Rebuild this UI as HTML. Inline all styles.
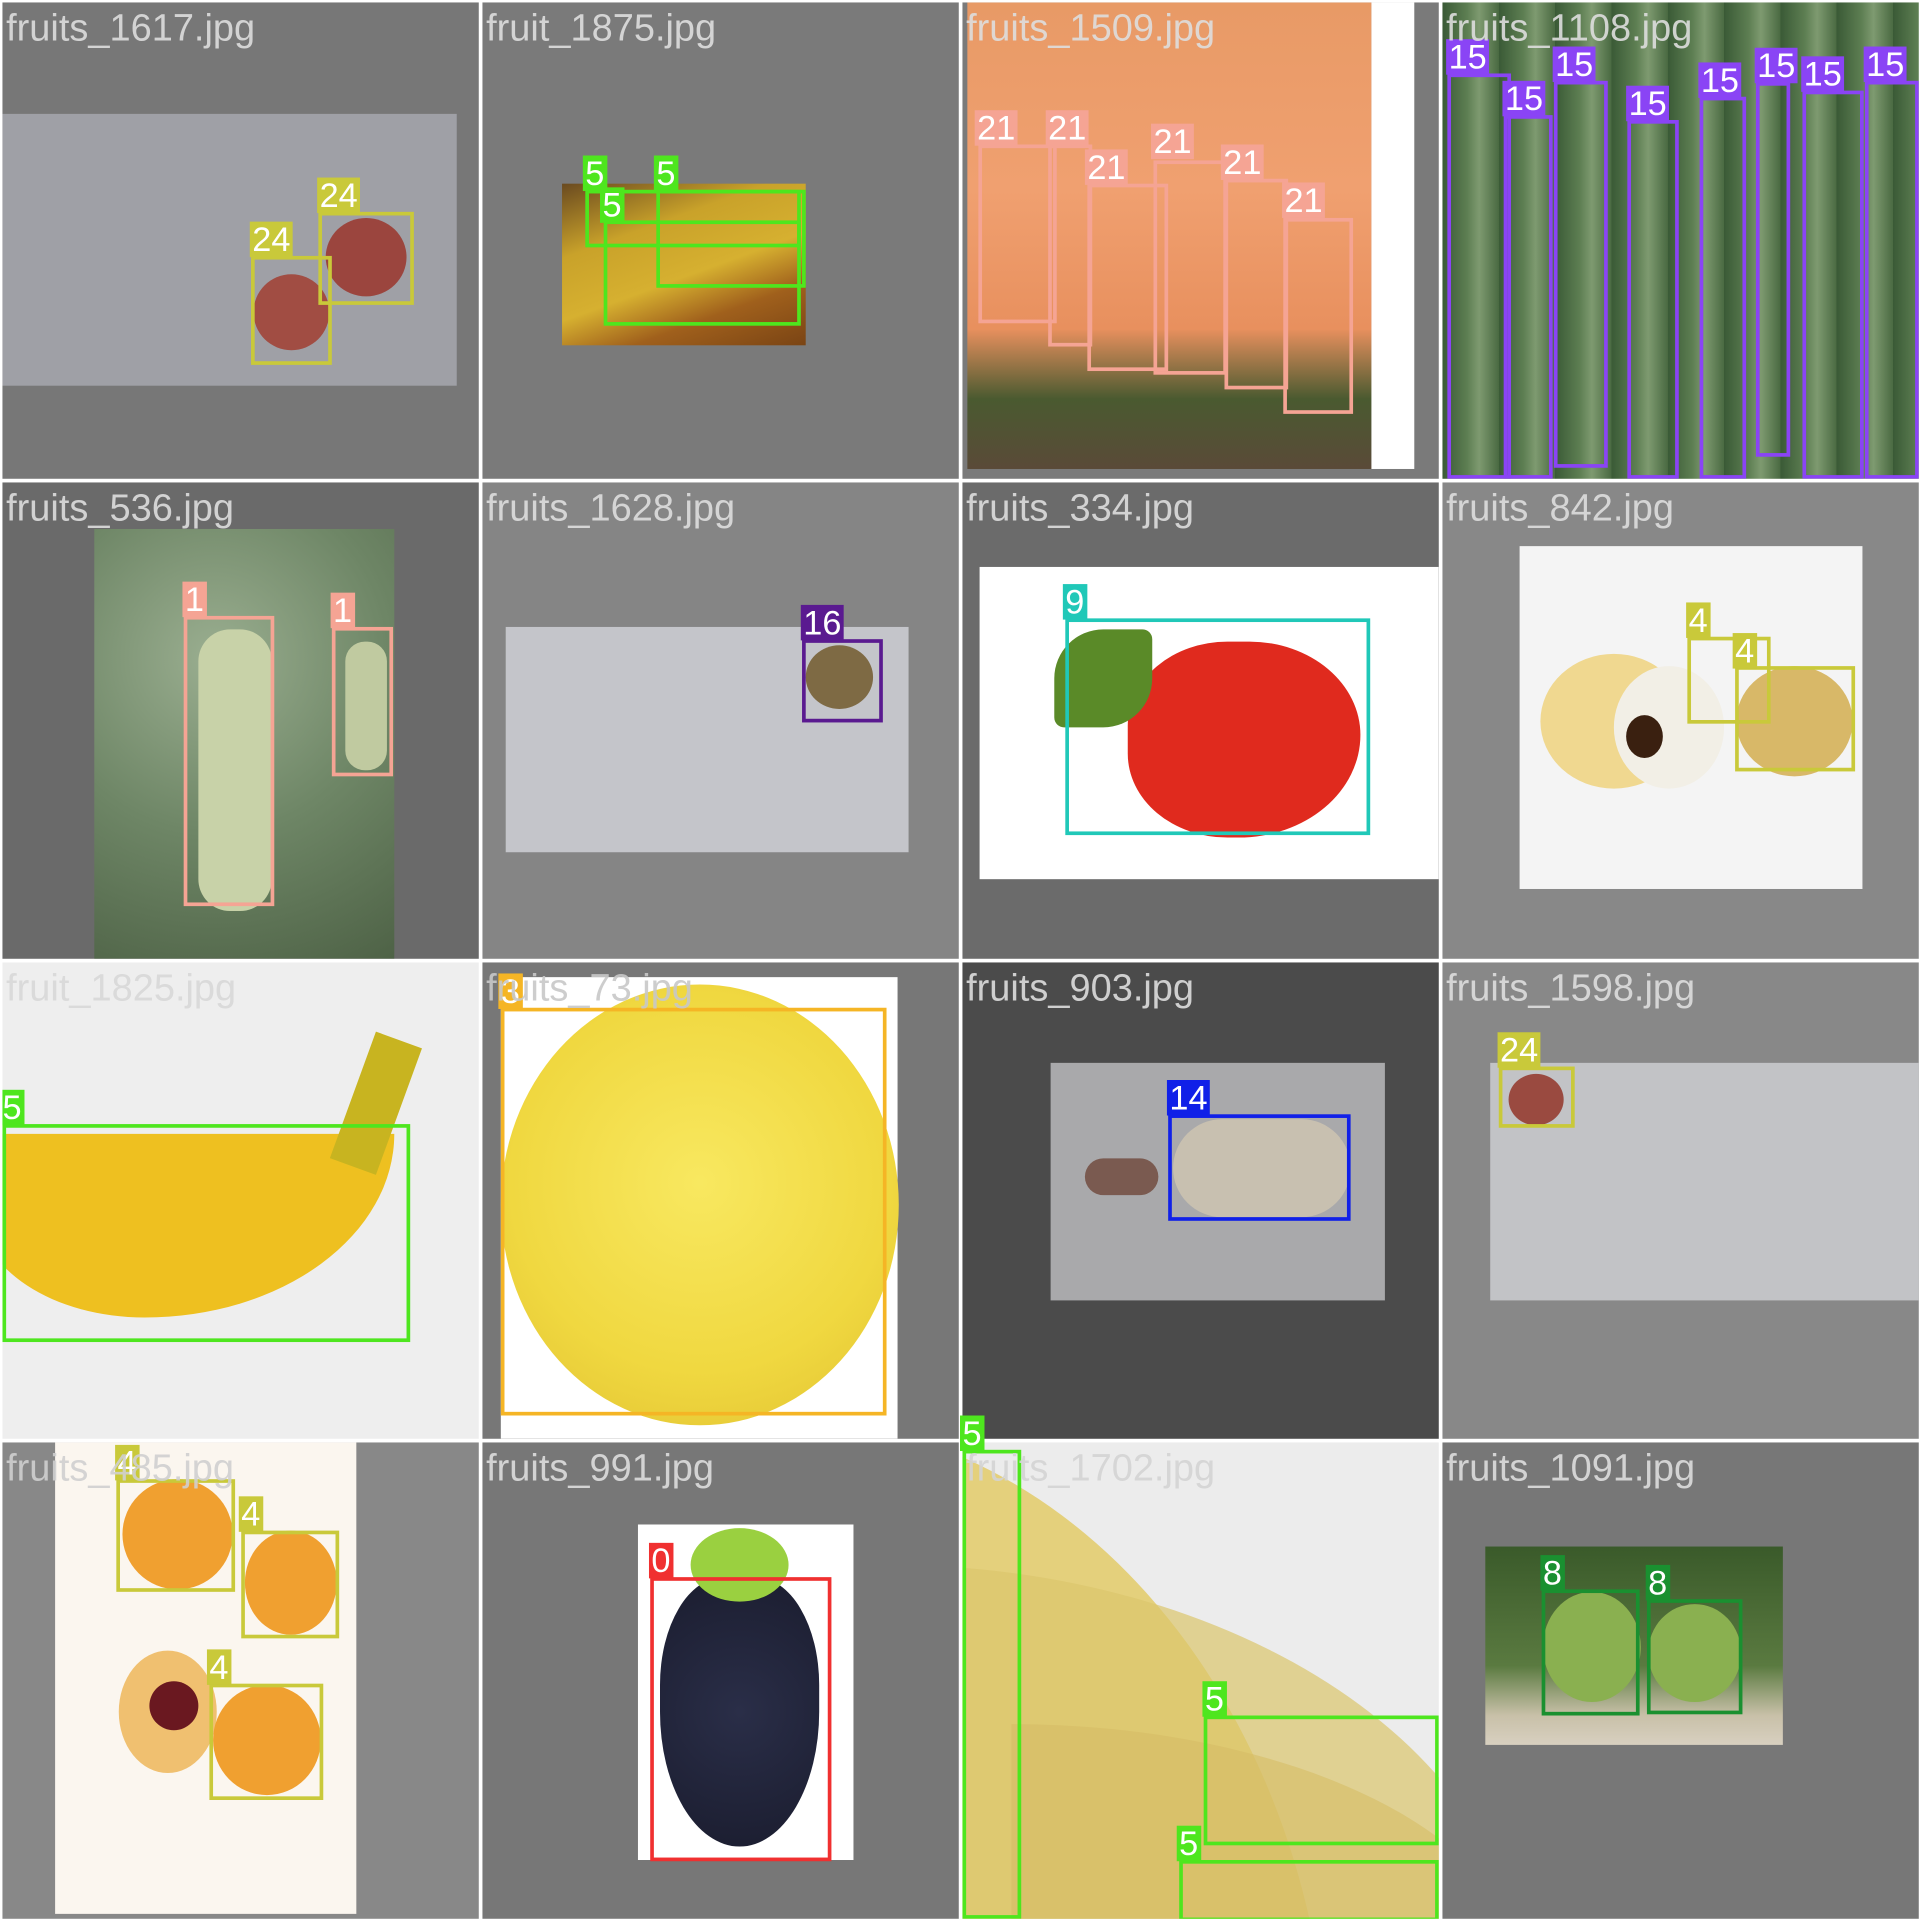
<!DOCTYPE html>
<html><head><meta charset="utf-8"><style>
html,body{margin:0;padding:0;background:#fff;width:1920px;height:1920px;overflow:hidden}
#w{position:absolute;left:0;top:0;width:1568px;height:1568px;transform:scale(1.22449);transform-origin:0 0;background:#fff}
.c{position:absolute;width:389px;height:389px;overflow:hidden}
.a{position:absolute}
.t{position:absolute;left:3px;top:3px;font:31px "Liberation Sans",sans-serif;color:#dedede;white-space:nowrap;opacity:.9}
.b{position:absolute;border:3px solid;box-sizing:border-box}
.l{position:absolute;font:28px/29px "Liberation Sans",sans-serif;color:#fff;padding:0 2px}
.r{position:absolute;border-radius:50%}
</style></head><body><div id="w">

<!-- row 0 -->
<div class="c" style="left:2px;top:2px;background:#777">
 <div class="a" style="left:0;top:91px;width:371px;height:222px;background:#9fa0a6"></div>
 <div class="r" style="left:205px;top:222px;width:62px;height:62px;background:#a14d43"></div>
 <div class="r" style="left:264px;top:176px;width:66px;height:64px;background:#9b453e"></div>
 <div class="b" style="left:203px;top:207px;width:66px;height:89px;border-color:#c9c93a"></div>
 <div class="l" style="left:202px;top:179px;background:#c9c93a">24</div>
 <div class="b" style="left:258px;top:171px;width:78px;height:76px;border-color:#c9c93a"></div>
 <div class="l" style="left:257px;top:143px;background:#c9c93a">24</div>
 <div class="t">fruits_1617.jpg</div>
</div>
<div class="c" style="left:394px;top:2px;background:#7a7a7a">
 <div class="a" style="left:65px;top:148px;width:199px;height:132px;background:linear-gradient(160deg,#6a4a20 0%,#c9a22a 30%,#d6b030 55%,#a0601c 75%,#7a4414 100%)"></div>
 <div class="b" style="left:84px;top:153px;width:176px;height:47px;border-color:#4ee61e"></div>
 <div class="l" style="left:82px;top:125px;background:#4ee61e">5</div>
 <div class="b" style="left:99px;top:178px;width:161px;height:86px;border-color:#4ee61e"></div>
 <div class="l" style="left:96px;top:151px;background:#4ee61e">5</div>
 <div class="b" style="left:142px;top:153px;width:122px;height:80px;border-color:#4ee61e"></div>
 <div class="l" style="left:140px;top:125px;background:#4ee61e">5</div>
 <div class="t">fruit_1875.jpg</div>
</div>
<div class="c" style="left:786px;top:2px;background:#7a7a7a">
 <div class="a" style="left:4px;top:0;width:330px;height:381px;background:linear-gradient(180deg,#e89a66 0%,#f0a070 40%,#e8905e 70%,#4a5a30 85%,#5a4a38 100%)"></div>
 <div class="a" style="left:334px;top:0;width:35px;height:381px;background:#fff"></div>
 <div class="b" style="left:13px;top:116px;width:64px;height:146px;border-color:#f5a494"></div>
 <div class="l" style="left:10px;top:88px;background:#f5a494">21</div>
 <div class="b" style="left:70px;top:116px;width:36px;height:165px;border-color:#f5a494"></div>
 <div class="l" style="left:68px;top:88px;background:#f5a494">21</div>
 <div class="b" style="left:102px;top:148px;width:66px;height:153px;border-color:#f5a494"></div>
 <div class="l" style="left:100px;top:120px;background:#f5a494">21</div>
 <div class="b" style="left:156px;top:129px;width:60px;height:175px;border-color:#f5a494"></div>
 <div class="l" style="left:154px;top:99px;background:#f5a494">21</div>
 <div class="b" style="left:214px;top:144px;width:52px;height:172px;border-color:#f5a494"></div>
 <div class="l" style="left:211px;top:116px;background:#f5a494">21</div>
 <div class="b" style="left:262px;top:176px;width:57px;height:160px;border-color:#f5a494"></div>
 <div class="l" style="left:261px;top:147px;background:#f5a494">21</div>
 <div class="t">fruits_1509.jpg</div>
</div>
<div class="c" style="left:1178px;top:2px;background:repeating-linear-gradient(90deg,#3a5a36 0,#5d7e52 20px,#7e9a70 30px,#4a6a42 46px)">
 <div class="b" style="left:4px;top:58px;width:52px;height:331px;border-color:#8a44f5"></div>
 <div class="l" style="left:3px;top:30px;background:#8a44f5">15</div>
 <div class="b" style="left:50px;top:92px;width:40px;height:297px;border-color:#8a44f5"></div>
 <div class="l" style="left:49px;top:64px;background:#8a44f5">15</div>
 <div class="b" style="left:91px;top:64px;width:44px;height:316px;border-color:#8a44f5"></div>
 <div class="l" style="left:90px;top:36px;background:#8a44f5">15</div>
 <div class="b" style="left:151px;top:96px;width:42px;height:293px;border-color:#8a44f5"></div>
 <div class="l" style="left:150px;top:68px;background:#8a44f5">15</div>
 <div class="b" style="left:210px;top:77px;width:38px;height:312px;border-color:#8a44f5"></div>
 <div class="l" style="left:209px;top:49px;background:#8a44f5">15</div>
 <div class="b" style="left:256px;top:65px;width:28px;height:306px;border-color:#8a44f5"></div>
 <div class="l" style="left:255px;top:37px;background:#8a44f5">15</div>
 <div class="b" style="left:294px;top:72px;width:50px;height:317px;border-color:#8a44f5"></div>
 <div class="l" style="left:293px;top:44px;background:#8a44f5">15</div>
 <div class="b" style="left:345px;top:64px;width:44px;height:325px;border-color:#8a44f5"></div>
 <div class="l" style="left:344px;top:36px;background:#8a44f5">15</div>
 <div class="t">fruits_1108.jpg</div>
</div>

<!-- row 1 -->
<div class="c" style="left:2px;top:394px;background:#6a6a6a">
 <div class="a" style="left:75px;top:38px;width:245px;height:351px;background:radial-gradient(circle at 40% 30%,#9aae90,#6e8666 50%,#4e6246 100%)"></div>
 <div class="a" style="left:160px;top:120px;width:60px;height:230px;background:#c8d2a8;border-radius:26px"></div>
 <div class="a" style="left:280px;top:130px;width:34px;height:105px;background:#c0caa0;border-radius:16px"></div>
 <div class="b" style="left:148px;top:109px;width:74px;height:237px;border-color:#f5a494"></div>
 <div class="l" style="left:147px;top:81px;background:#f5a494">1</div>
 <div class="b" style="left:269px;top:118px;width:50px;height:122px;border-color:#f5a494"></div>
 <div class="l" style="left:268px;top:90px;background:#f5a494">1</div>
 <div class="t">fruits_536.jpg</div>
</div>
<div class="c" style="left:394px;top:394px;background:#858585">
 <div class="a" style="left:19px;top:118px;width:329px;height:184px;background:#c4c5ca"></div>
 <div class="r" style="left:264px;top:133px;width:55px;height:52px;background:#7e6a44"></div>
 <div class="b" style="left:261px;top:128px;width:66px;height:68px;border-color:#5a1a90"></div>
 <div class="l" style="left:260px;top:100px;background:#5a1a90">16</div>
 <div class="t">fruits_1628.jpg</div>
</div>
<div class="c" style="left:786px;top:394px;background:#6b6b6b">
 <div class="a" style="left:14px;top:69px;width:375px;height:255px;background:#fff"></div>
 <div class="a" style="left:135px;top:130px;width:190px;height:160px;background:#e02a1e;border-radius:45% 50% 55% 45%"></div>
 <div class="a" style="left:75px;top:120px;width:80px;height:80px;background:#5a8a28;border-radius:50% 10% 50% 10%"></div>
 <div class="b" style="left:84px;top:111px;width:249px;height:177px;border-color:#20c8b8"></div>
 <div class="l" style="left:82px;top:83px;background:#20c8b8">9</div>
 <div class="t">fruits_334.jpg</div>
</div>
<div class="c" style="left:1178px;top:394px;background:#888">
 <div class="a" style="left:63px;top:52px;width:280px;height:280px;background:#f4f4f4"></div>
 <div class="r" style="left:80px;top:140px;width:120px;height:110px;background:#f0d890"></div>
 <div class="r" style="left:140px;top:150px;width:90px;height:100px;background:#f2efe6"></div>
 <div class="r" style="left:150px;top:190px;width:30px;height:35px;background:#3a2010"></div>
 <div class="r" style="left:240px;top:150px;width:95px;height:90px;background:#d8b868"></div>
 <div class="b" style="left:200px;top:126px;width:68px;height:71px;border-color:#c9c93a"></div>
 <div class="l" style="left:199px;top:98px;background:#c9c93a">4</div>
 <div class="b" style="left:239px;top:150px;width:98px;height:86px;border-color:#c9c93a"></div>
 <div class="l" style="left:237px;top:123px;background:#c9c93a">4</div>
 <div class="t">fruits_842.jpg</div>
</div>

<!-- row 2 -->
<div class="c" style="left:2px;top:786px;background:#eeeeee">
 <div class="a" style="left:-20px;top:140px;width:340px;height:150px;background:#eec020;border-radius:0 0 60% 40%/0 0 100% 60%"></div>
 <div class="a" style="left:285px;top:60px;width:40px;height:110px;background:#c8b420;transform:rotate(20deg)"></div>
 <div class="b" style="left:0;top:132px;width:333px;height:178px;border-color:#4ee61e"></div>
 <div class="l" style="left:-2px;top:104px;background:#4ee61e">5</div>
 <div class="t" style="color:#d8d8d8">fruit_1825.jpg</div>
</div>
<div class="c" style="left:394px;top:786px;background:#777">
 <div class="a" style="left:15px;top:12px;width:324px;height:377px;background:#fff"></div>
 <div class="r" style="left:15px;top:18px;width:325px;height:360px;background:radial-gradient(circle at 50% 45%,#f8e860,#f0d840 60%,#e0c030)"></div>
 <div class="b" style="left:15px;top:37px;width:315px;height:333px;border-color:#f5b525"></div>
 <div class="l" style="left:13px;top:9px;background:#f5b525">3</div>
 <div class="t" style="color:#c8c8c8">fruits_73.jpg</div>
</div>
<div class="c" style="left:786px;top:786px;background:#4b4b4b">
 <div class="a" style="left:72px;top:82px;width:273px;height:194px;background:#a9a9ab"></div>
 <div class="a" style="left:172px;top:128px;width:145px;height:80px;background:#c8c0b0;border-radius:40px"></div>
 <div class="a" style="left:100px;top:160px;width:60px;height:30px;background:#7a5a50;border-radius:15px"></div>
 <div class="b" style="left:168px;top:124px;width:149px;height:87px;border-color:#1020e8"></div>
 <div class="l" style="left:167px;top:96px;background:#1020e8">14</div>
 <div class="t">fruits_903.jpg</div>
</div>
<div class="c" style="left:1178px;top:786px;background:#888">
 <div class="a" style="left:39px;top:82px;width:350px;height:194px;background:#c2c3c6"></div>
 <div class="r" style="left:54px;top:91px;width:45px;height:42px;background:#9a4a40"></div>
 <div class="b" style="left:46px;top:85px;width:62px;height:50px;border-color:#c9c93a"></div>
 <div class="l" style="left:45px;top:57px;background:#c9c93a">24</div>
 <div class="t">fruits_1598.jpg</div>
</div>

<!-- row 3 -->
<div class="c" style="left:2px;top:1178px;background:#888">
 <div class="a" style="left:43px;top:0;width:246px;height:385px;background:#fbf6ef"></div>
 <div class="r" style="left:98px;top:30px;width:90px;height:90px;background:#f0a030"></div>
 <div class="r" style="left:198px;top:72px;width:75px;height:85px;background:#f0a030"></div>
 <div class="r" style="left:95px;top:170px;width:80px;height:100px;background:#f0c070"></div>
 <div class="r" style="left:120px;top:195px;width:40px;height:40px;background:#6a1820"></div>
 <div class="r" style="left:172px;top:198px;width:88px;height:90px;background:#f0a030"></div>
 <div class="b" style="left:93px;top:30px;width:97px;height:92px;border-color:#c9c93a"></div>
 <div class="l" style="left:92px;top:2px;background:#c9c93a">4</div>
 <div class="b" style="left:195px;top:72px;width:80px;height:88px;border-color:#c9c93a"></div>
 <div class="l" style="left:193px;top:44px;background:#c9c93a">4</div>
 <div class="b" style="left:169px;top:197px;width:93px;height:95px;border-color:#c9c93a"></div>
 <div class="l" style="left:167px;top:169px;background:#c9c93a">4</div>
 <div class="t" style="color:#d0d0d0">fruits_485.jpg</div>
</div>
<div class="c" style="left:394px;top:1178px;background:#777">
 <div class="a" style="left:127px;top:67px;width:176px;height:274px;background:#fff"></div>
 <div class="a" style="left:145px;top:110px;width:130px;height:220px;background:radial-gradient(circle,#2a2e48,#1a1c2e);border-radius:40% 40% 50% 50%"></div>
 <div class="a" style="left:170px;top:70px;width:80px;height:60px;background:#9ad040;border-radius:50%"></div>
 <div class="b" style="left:137px;top:110px;width:148px;height:232px;border-color:#f03030"></div>
 <div class="l" style="left:136px;top:82px;background:#f03030">0</div>
 <div class="t">fruits_991.jpg</div>
</div>
<div class="c" style="left:786px;top:1178px;background:#ececec">
 <div class="a" style="left:-150px;top:-20px;width:450px;height:700px;background:#e4d07c;border-radius:0 100% 0 0/0 80% 0 0"></div>
 <div class="a" style="left:-60px;top:100px;width:520px;height:500px;background:#dcc66c;border-radius:0 100% 0 0/0 70% 0 0;opacity:.7"></div>
 <div class="a" style="left:40px;top:230px;width:420px;height:300px;background:#d6bd66;border-radius:0 100% 0 0/0 70% 0 0;opacity:.6"></div>
 <div class="b" style="left:0;top:6px;width:48px;height:383px;border-color:#4ee61e"></div>
 <div class="b" style="left:197px;top:223px;width:192px;height:106px;border-color:#4ee61e"></div>
 <div class="l" style="left:196px;top:195px;background:#4ee61e">5</div>
 <div class="b" style="left:177px;top:341px;width:212px;height:50px;border-color:#4ee61e"></div>
 <div class="l" style="left:175px;top:313px;background:#4ee61e">5</div>
 <div class="t" style="color:#d4d4d4">fruits_1702.jpg</div>
</div>
<div class="l" style="left:784px;top:1156px;background:#4ee61e">5</div>
<div class="c" style="left:1178px;top:1178px;background:#777">
 <div class="a" style="left:35px;top:85px;width:243px;height:162px;background:linear-gradient(180deg,#3a5a2a,#5a7a40 60%,#c8c0a8 85%,#d8d0c0)"></div>
 <div class="r" style="left:82px;top:122px;width:80px;height:90px;background:#8ab050"></div>
 <div class="r" style="left:168px;top:132px;width:76px;height:80px;background:#8ab050"></div>
 <div class="b" style="left:81px;top:120px;width:80px;height:103px;border-color:#1a9030"></div>
 <div class="l" style="left:80px;top:92px;background:#1a9030">8</div>
 <div class="b" style="left:167px;top:128px;width:78px;height:94px;border-color:#1a9030"></div>
 <div class="l" style="left:166px;top:100px;background:#1a9030">8</div>
 <div class="t">fruits_1091.jpg</div>
</div>

</div></body></html>
